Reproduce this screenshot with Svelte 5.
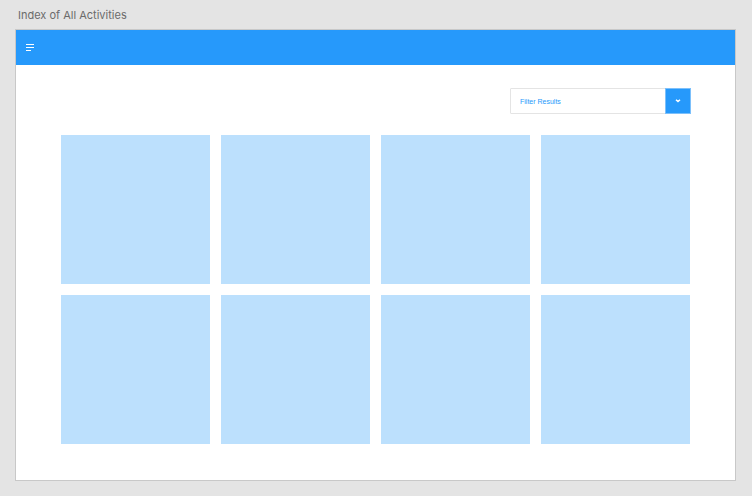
<script>
  const filters = ['Filter Results'];
  const activities = Array.from({ length: 8 }, (_, i) => i + 1);
  let selected = $state(filters[0]);
</script>

<main class="page">
  <h1>Index of All Activities</h1>
  <div class="frame">
    <header>
      <button class="menu" type="button" aria-label="Menu">
        <svg width="8" height="8" viewBox="0 0 8 8" fill="#fff" shape-rendering="crispEdges" aria-hidden="true">
          <rect width="8" height="1" />
          <rect y="3" width="8" height="1" />
          <rect y="6" width="5" height="1" />
        </svg>
      </button>
    </header>
    <div class="content">
      <div class="filter">
        <select aria-label="Filter Results" bind:value={selected}>
          {#each filters as filter}
            <option>{filter}</option>
          {/each}
        </select>
        <span class="arrow">
          <svg width="6" height="4" viewBox="0 0 6 4" fill="none" stroke="#fff" stroke-width="1.5" aria-hidden="true">
            <path d="M1 .8 3 2.6 5 .8" />
          </svg>
        </span>
      </div>
      <ul class="grid">
        {#each activities as activity (activity)}
          <li></li>
        {/each}
      </ul>
    </div>
  </div>
</main>

<style>
  :global(body) {
    margin: 0;
    background: #e4e4e4;
  }
  .page {
    padding: 8px 16px 15px 15px;
    font-family: Inter, 'Liberation Sans', sans-serif;
  }
  h1 {
    margin: 0 0 7px 3px;
    font-size: 11px;
    line-height: 14px;
    font-weight: 400;
    color: #6b6b6b;
  }
  .frame {
    border: 1px solid #c8c8c8;
    background: #fff;
  }
  header {
    display: flex;
    align-items: center;
    height: 35px;
    padding: 0 10px;
    background: #2699fb;
  }
  .menu {
    display: flex;
    padding: 0;
    border: 0;
    background: none;
    cursor: pointer;
  }
  .content {
    padding: 23px 45px 36px;
  }
  .filter {
    position: relative;
    width: 181px;
    height: 26px;
    margin: 0 -1px 21px auto;
  }
  select {
    appearance: none;
    display: block;
    box-sizing: border-box;
    width: 100%;
    height: 100%;
    padding: 0 36px 0 9px;
    border: 1px solid #e4e4e4;
    border-radius: 1px;
    background: #fff;
    color: #2699fb;
    font: 7px 'Liberation Sans', Arial, sans-serif;
  }
  .arrow {
    position: absolute;
    inset: 0 0 0 auto;
    box-sizing: border-box;
    display: flex;
    align-items: center;
    justify-content: center;
    width: 26px;
    border: 1px solid #7cc0fb;
    background: #2699fb;
    pointer-events: none;
  }
  .grid {
    display: grid;
    grid-template-columns: repeat(4, 1fr);
    gap: 11px;
    margin: 0;
    padding: 0;
    list-style: none;
  }
  li {
    aspect-ratio: 1;
    background: #bce0fd;
  }
</style>
